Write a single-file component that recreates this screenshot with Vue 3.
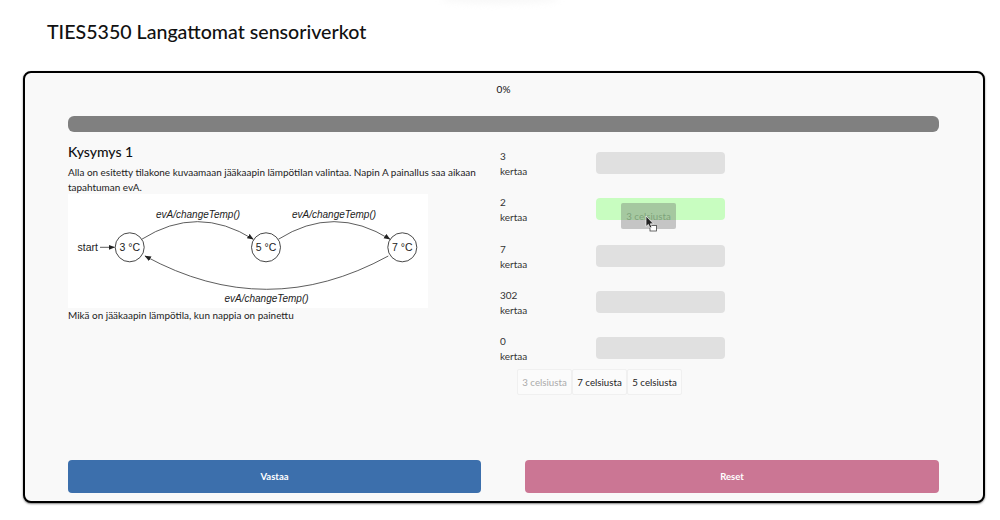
<script setup>
const rows = [
  { count: '3', filled: false },
  { count: '2', filled: true },
  { count: '7', filled: false },
  { count: '302', filled: false },
  { count: '0', filled: false },
];
const choices = [
  { label: '3 celsiusta', used: true },
  { label: '7 celsiusta', used: false },
  { label: '5 celsiusta', used: false },
];
const edges = [
  { d: 'M73.7 45.3 Q129.5 10 185.3 45.3', x: 130, y: 24 },
  { d: 'M210.3 45.3 Q266 10 322 45.3', x: 266, y: 24 },
  { d: 'M320.3 62 Q198.6 128.6 77 62', x: 198.5, y: 108 },
];
const states = [
  { x: 61.7, label: '3 °C' },
  { x: 198, label: '5 °C' },
  { x: 334.3, label: '7 °C' },
];
</script>

<template>
  <div class="page">
    <div class="top-glow"></div>
    <h1 class="course-title">TIES5350 Langattomat sensoriverkot</h1>
    <div class="quiz-card">
      <div class="percent">0%</div>
      <div class="progress-bar"></div>
      <div class="columns">
        <div class="question">
          <h2 class="question-title">Kysymys 1</h2>
          <p class="question-text">Alla on esitetty tilakone kuvaamaan jääkaapin lämpötilan valintaa. Napin A painallus saa aikaan tapahtuman evA.</p>
          <svg class="diagram" width="360" height="114" viewBox="0 0 360 114">
            <defs>
              <marker id="head" markerWidth="7" markerHeight="6" refX="6" refY="3" orient="auto" markerUnits="userSpaceOnUse">
                <path d="M0 0.4 L6.5 3 L0 5.6 Z" fill="#222" />
              </marker>
            </defs>
            <text class="diagram-text" x="9.5" y="56.7">start</text>
            <path d="M32 53.3 H46.5" class="edge" marker-end="url(#head)" />
            <template v-for="edge in edges" :key="edge.d">
              <path :d="edge.d" class="edge" marker-end="url(#head)" />
              <text class="diagram-label" :x="edge.x" :y="edge.y" text-anchor="middle">evA/changeTemp()</text>
            </template>
            <template v-for="state in states" :key="state.x">
              <circle :cx="state.x" cy="53.3" r="14.5" class="state" />
              <text class="diagram-text" :x="state.x" y="56.9" text-anchor="middle">{{ state.label }}</text>
            </template>
          </svg>
          <p class="question-text">Mikä on jääkaapin lämpötila, kun nappia on painettu</p>
        </div>
        <div class="answers">
          <div class="answer-rows">
            <div v-for="row in rows" :key="row.count" class="answer-row">
              <div class="answer-label">{{ row.count }}<br />kertaa</div>
              <div class="drop-box" :class="{ 'drop-box-active': row.filled }"></div>
            </div>
          </div>
          <div class="choices">
            <div v-for="choice in choices" :key="choice.label" class="choice" :class="{ 'choice-used': choice.used }">
              {{ choice.label }}
            </div>
          </div>
          <div class="drag-ghost">3 celsiusta</div>
          <svg class="drag-cursor" width="14" height="20" viewBox="0 0 14 20">
            <rect x="5" y="10.5" width="6.5" height="5.5" fill="#fff" stroke="#444" stroke-width="0.8" />
            <path d="M1 1 V11.5 L3.4 9.4 L5 13 L6.8 12.2 L5.3 8.8 H8.4 Z" fill="#222" stroke="#fff" stroke-width="0.7" />
          </svg>
        </div>
      </div>
      <div class="actions">
        <button class="action-button submit-button">Vastaa</button>
        <button class="action-button reset-button">Reset</button>
      </div>
    </div>
  </div>
</template>

<style>
body {
  background: #fff;
}
</style>

<style scoped>
.page {
  position: relative;
  width: 1000px;
  height: 520px;
  padding: 21px 15px 0 23px;
  box-sizing: border-box;
  overflow: hidden;
  font-family: Lato, "Noto Sans", sans-serif;
  color: #111;
}

.top-glow {
  position: absolute;
  left: 440px;
  top: -6px;
  width: 120px;
  height: 10px;
  border-radius: 50%;
  background: #f8f8f8;
  filter: blur(3px);
}

.course-title {
  margin: 0 0 28px 24px;
  font-size: 19.6px;
  line-height: 22px;
  font-weight: 500;
}

.quiz-card {
  display: flex;
  flex-direction: column;
  box-sizing: border-box;
  width: 962px;
  height: 432px;
  padding: 7px 44px 8px 43px;
  background: #f9f9f9;
  border: 2px solid #000;
  border-radius: 8px;
  box-shadow: 0 1px 2px rgba(0, 0, 0, 0.5);
}

.percent {
  font-size: 10px;
  line-height: 18px;
  text-align: center;
  margin-bottom: 18px;
}

.progress-bar {
  height: 16px;
  background: #808080;
  border-radius: 6px;
  margin-bottom: 9px;
}

.columns {
  display: grid;
  grid-template-columns: 432px 1fr;
}

.question-title {
  margin: 0 0 2px;
  font-size: 14px;
  line-height: 22px;
  font-weight: 500;
}

.question-text {
  margin: 0;
  font-size: 9.95px;
  line-height: 15px;
  color: #222;
}

.diagram {
  display: block;
  margin-top: -1px;
  background: #fff;
}

.edge {
  fill: none;
  stroke: #333;
  stroke-width: 0.8;
}

.state {
  fill: #fff;
  stroke: #333;
  stroke-width: 0.9;
}

.diagram-text {
  font-family: "Liberation Sans", Arial, sans-serif;
  font-size: 10.5px;
  fill: #222;
}

.diagram-label {
  font-family: "Liberation Sans", Arial, sans-serif;
  font-style: italic;
  font-size: 10px;
  fill: #222;
}

.answers {
  position: relative;
  padding-top: 11px;
}

.answer-rows {
  display: flex;
  flex-direction: column;
  gap: 18.25px;
}

.answer-row {
  display: flex;
  height: 28px;
}

.answer-label {
  width: 96px;
  margin-top: -3px;
  font-size: 10px;
  line-height: 15px;
  color: #333;
}

.drop-box {
  width: 129px;
  height: 22px;
  background: #e0e0e0;
  border-radius: 4px;
}

.drop-box-active {
  background: #c8fdc0;
}

.choices {
  display: flex;
  margin: 4px 0 0 17px;
}

.choice {
  box-sizing: border-box;
  width: 55px;
  height: 26px;
  font-size: 9.7px;
  line-height: 24px;
  text-align: center;
  white-space: nowrap;
  border: 1px solid #f0f0f0;
  border-radius: 2px;
  background: #fbfbfb;
  color: #222;
}

.choice-used {
  color: #aaa;
}

.drag-ghost {
  position: absolute;
  left: 121px;
  top: 62px;
  width: 55px;
  height: 26px;
  font-size: 9.7px;
  line-height: 26px;
  text-align: center;
  white-space: nowrap;
  border-radius: 2px;
  background: rgba(100, 100, 100, 0.35);
  color: rgba(60, 100, 60, 0.4);
}

.drag-cursor {
  position: absolute;
  left: 145px;
  top: 74px;
}

.actions {
  display: flex;
  gap: 44px;
  margin-top: auto;
}

.action-button {
  height: 33px;
  border: none;
  border-radius: 4px;
  font-family: inherit;
  font-size: 9.5px;
  font-weight: 700;
  color: #fff;
}

.submit-button {
  width: 413px;
  background: #3c6fac;
}

.reset-button {
  flex: 1;
  background: #cb7694;
}
</style>
